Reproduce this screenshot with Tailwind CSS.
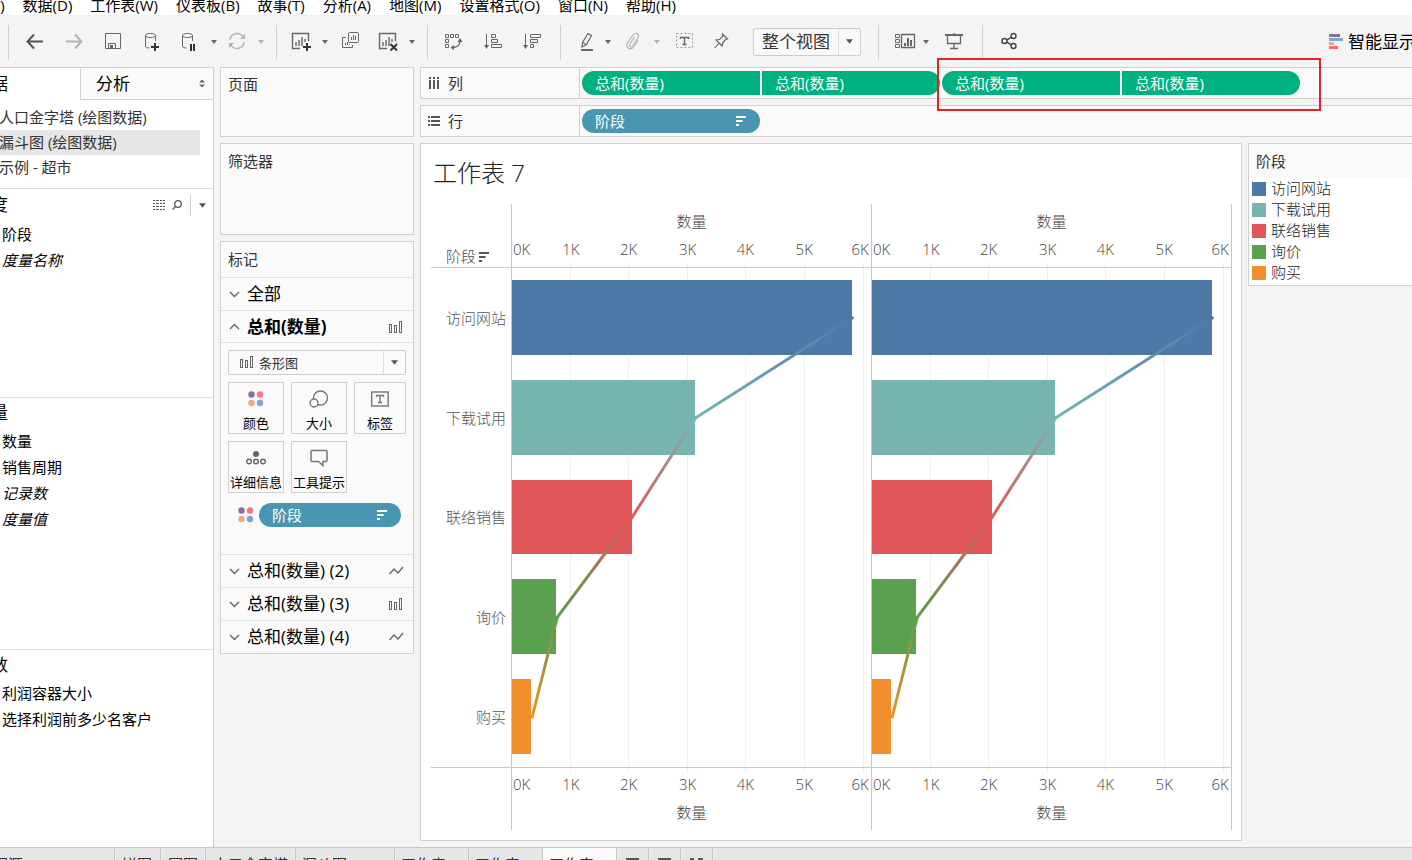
<!DOCTYPE html>
<html lang="zh-CN">
<head>
<meta charset="utf-8">
<title>工作表 7</title>
<script src="https://cdn.jsdelivr.net/npm/@tailwindcss/browser@4"></script>
</head>
<body class="flex h-screen flex-col overflow-hidden bg-[#f4f4f4] font-['Open_Sans','Noto_Sans_CJK_SC',sans-serif] text-[15px] leading-5 text-[#333]">

<!-- shared drawings -->
<svg class="absolute h-0 w-0" aria-hidden="true">
  <defs>
    <linearGradient id="g1" x1="1" y1="0" x2="0" y2="1"><stop offset="0" stop-color="#4e79a7"/><stop offset=".35" stop-color="#5b90b0"/><stop offset="1" stop-color="#76b7b2"/></linearGradient>
    <linearGradient id="g2" x1="1" y1="0" x2="0" y2="1"><stop offset="0" stop-color="#76b7b2"/><stop offset="1" stop-color="#e15759"/></linearGradient>
    <linearGradient id="g3" x1="1" y1="0" x2="0" y2="1"><stop offset="0" stop-color="#e15759"/><stop offset="1" stop-color="#59a14f"/></linearGradient>
    <linearGradient id="g4" x1="1" y1="0" x2="0" y2="1"><stop offset="0" stop-color="#59a14f"/><stop offset="1" stop-color="#f28e2b"/></linearGradient>
    <g id="plot">
      <g stroke="#f0f0f0" shape-rendering="crispEdges">
        <line x1="16.4%" x2="16.4%" y1="0" y2="100%"/><line x1="32.5%" x2="32.5%" y1="0" y2="100%"/><line x1="48.9%" x2="48.9%" y1="0" y2="100%"/><line x1="65%" x2="65%" y1="0" y2="100%"/><line x1="81.4%" x2="81.4%" y1="0" y2="100%"/><line x1="97.9%" x2="97.9%" y1="0" y2="100%"/>
      </g>
      <g shape-rendering="crispEdges">
        <rect x="0" y="2.4%" width="94.8%" height="15%" fill="#4e79a7"/>
        <rect x="0" y="22.4%" width="51%" height="15%" fill="#79b5b0"/>
        <rect x="0" y="42.4%" width="33.4%" height="15%" fill="#e15759"/>
        <rect x="0" y="62.4%" width="12.3%" height="15%" fill="#59a14f"/>
        <rect x="0" y="82.4%" width="5.4%" height="15%" fill="#f28e2b"/>
      </g>
      <g stroke-width="3" stroke-linecap="round">
        <line x1="94.8%" y1="10%" x2="51.2%" y2="30%" stroke="url(#g1)"/>
        <line x1="51.2%" y1="30%" x2="33.4%" y2="50%" stroke="url(#g2)"/>
        <line x1="33.4%" y1="50%" x2="12.6%" y2="70%" stroke="url(#g3)"/>
        <line x1="12.6%" y1="70%" x2="5.6%" y2="90%" stroke="url(#g4)"/>
      </g>
    </g>
    <g id="ticks" stroke="#f0f0f0" shape-rendering="crispEdges">
      <line x1="16.4%" x2="16.4%" y1="0" y2="5"/><line x1="32.5%" x2="32.5%" y1="0" y2="5"/><line x1="48.9%" x2="48.9%" y1="0" y2="5"/><line x1="65%" x2="65%" y1="0" y2="5"/><line x1="81.4%" x2="81.4%" y1="0" y2="5"/><line x1="97.9%" x2="97.9%" y1="0" y2="5"/>
    </g>
    <g id="bars" fill="none" stroke="#666"><rect x=".5" y="4.5" width="2" height="8"/><rect x="5.5" y="5.5" width="2" height="7"/><rect x="10.5" y="1.5" width="2" height="11"/></g>
    <path id="zig" d="M.5 10L5 5L9 9L14 3" fill="none" stroke="#666" stroke-width="1.4"/>
    <path id="down" d="M1 3L5.500 7.500L10 3" fill="none" stroke="#666" stroke-width="1.4"/>
    <path id="up" d="M1 8L5.500 3.500L10 8" fill="none" stroke="#666" stroke-width="1.4"/>
    <path id="caret" d="M0 0H6L3 4Z"/>
    <path id="sort" d="M0 1H10M0 5H6.500M0 9H3" fill="none" stroke-width="2"/>
    <g id="dots"><circle cx="3.500" cy="3.500" r="3.200" fill="#8a6f9b"/><circle cx="12" cy="3.500" r="3.200" fill="#f9767f"/><circle cx="3.500" cy="12" r="3.200" fill="#f3a97e"/><circle cx="12" cy="12" r="3.200" fill="#7fa6cf"/></g>
    <path id="db" d="M3.500 4.500C3.500 1.800 13.500 1.800 13.500 4.500C13.500 7.200 3.500 7.200 3.500 4.500V15C3.500 16.500 5 17 7.500 17M13.500 4.500V10" fill="none"/>
    <path id="sheet" d="M9 17.500H1.500V2.500H17.500V10M5 15V11M8 15V9M11 15V6M14 11V8" fill="none"/>
  </defs>
</svg>

<nav class="flex h-4 shrink-0 items-end overflow-hidden border-b border-[#f0f0f0] bg-white text-black">
  <div class="-ml-[42px] flex gap-[18px] whitespace-nowrap">
    <a href="#">文件(F)</a><a href="#">数据(D)</a><a href="#">工作表(W)</a><a href="#">仪表板(B)</a><a href="#">故事(T)</a><a href="#">分析(A)</a><a href="#">地图(M)</a><a href="#">设置格式(O)</a><a href="#">窗口(N)</a><a href="#">帮助(H)</a>
  </div>
</nav>

<header class="flex h-[51px] shrink-0 items-center overflow-hidden pl-2">
  <i class="mt-px h-[35px] w-px shrink-0 bg-[#d0d0d0]"></i>
  <button aria-label="后退" class="ml-4 shrink-0"><svg width="20" height="20" fill="none" stroke="#555" stroke-width="2"><path d="M2 9.500H18M9 2.500L2.500 9.500L9 16.500"/></svg></button>
  <button aria-label="前进" class="ml-[19px] shrink-0"><svg width="20" height="20" fill="none" stroke="#b4b4b4" stroke-width="2"><path d="M2 9.500H18M11 2.500L17.500 9.500L11 16.500"/></svg></button>
  <button aria-label="保存" class="ml-[19px] shrink-0"><svg width="20" height="20" fill="none" stroke="#666"><path d="M2.500 1.500H17.500V16.500H2.500ZM5.500 16V11.500H12.500V16"/><rect x="7" y="13" width="3" height="3" fill="#666" stroke="none"/></svg></button>
  <button aria-label="新建数据源" class="ml-[19px] shrink-0"><svg width="20" height="20" viewBox="0 1 20 20" stroke="#666"><use href="#db"/><path d="M9 16H17M13 12V20" stroke="#333" stroke-width="2"/></svg></button>
  <button aria-label="暂停自动更新" class="ml-[17px] shrink-0"><svg width="20" height="20" viewBox="0 1 20 20" stroke="#666"><use href="#db"/><path d="M12 13V20M15 13V20" stroke="#333" stroke-width="2"/></svg></button>
  <button aria-label="更多" class="ml-3 shrink-0"><svg width="6" height="4" fill="#666"><use href="#caret"/></svg></button>
  <button aria-label="刷新" class="ml-2.5 shrink-0"><svg width="20" height="20" viewBox="0 1 20 20" fill="none" stroke="#b4b4b4" stroke-width="1.4"><path d="M3 9A7 7 0 0 1 16 6M17 11A7 7 0 0 1 4 14"/><path d="M18 3V8H13ZM2 17V12H7Z" fill="#b4b4b4" stroke="none"/></svg></button>
  <button aria-label="更多" class="ml-[11px] shrink-0"><svg width="6" height="4" fill="#b4b4b4"><use href="#caret"/></svg></button>
  <i class="mt-px ml-3 h-[35px] w-px shrink-0 bg-[#d0d0d0]"></i>
  <button aria-label="新建工作表" class="ml-[14px] shrink-0"><svg width="20" height="20" viewBox="0 1 20 20" stroke="#666" stroke-width="1.400"><use href="#sheet"/><path d="M12 16H20M16 12V20" stroke="#333" stroke-width="2"/></svg></button>
  <button aria-label="更多" class="ml-[11px] shrink-0"><svg width="6" height="4" fill="#666"><use href="#caret"/></svg></button>
  <button aria-label="复制" class="ml-[13px] shrink-0"><svg width="20" height="20" viewBox="0 1 20 20" fill="none" stroke="#666"><rect x="7.500" y="1.500" width="10" height="10" rx="1"/><path d="M5 6.500H1.500V16.500H11.500V14M10.500 9V6M12.500 9V4M14.500 9V5M4.500 14V12M6.500 14V11M8.500 14V13" /></svg></button>
  <button aria-label="清除工作表" class="ml-[17px] shrink-0"><svg width="20" height="20" viewBox="0 1 20 20" stroke="#666" stroke-width="1.400"><use href="#sheet"/><path d="M12.500 13L19 19.500M19 13L12.500 19.500" stroke="#333" stroke-width="2"/></svg></button>
  <button aria-label="更多" class="ml-[11px] shrink-0"><svg width="6" height="4" fill="#666"><use href="#caret"/></svg></button>
  <i class="mt-px ml-3 h-[35px] w-px shrink-0 bg-[#d0d0d0]"></i>
  <button aria-label="交换行和列" class="ml-4 shrink-0"><svg width="20" height="20" viewBox="0 1 20 20" fill="none" stroke="#666"><path d="M1.500 3.500h3v3h-3zM6.500 3.500h3v3h-3zM11.500 3.500h3v3h-3zM1.500 8.500h3v3h-3zM1.500 13.500h3v3h-3z"/><path d="M16 10C16 14 13 16.500 8 16.500" stroke-width="1.300"/><path d="M16 7L18.500 11H13.500ZM6.500 16.500L10 14V19Z" fill="#666" stroke="none"/></svg></button>
  <button aria-label="升序排序" class="ml-[19px] shrink-0"><svg width="20" height="20" fill="none" stroke="#666"><path d="M3.500 2V15M8.500 2.500h4v3h-4zM8.500 7.500h6v3h-6zM8.500 12.500h10v3h-10z"/><path d="M1 13H6L3.500 17Z" fill="#666" stroke="none"/></svg></button>
  <button aria-label="降序排序" class="ml-[19px] shrink-0"><svg width="20" height="20" fill="none" stroke="#666"><path d="M3.500 2V15M8.500 2.500h10v3h-10zM8.500 7.500h7v3h-7zM8.500 12.500h3v3h-3z"/><path d="M1 13H6L3.500 17Z" fill="#666" stroke="none"/></svg></button>
  <i class="mt-px ml-[18px] h-[35px] w-px shrink-0 bg-[#d0d0d0]"></i>
  <button aria-label="突出显示" class="ml-4 shrink-0"><svg width="20" height="20" viewBox="0 1 20 20" fill="none" stroke="#666" stroke-width="1.200"><path d="M11 2.500L14.500 4.500L9.500 13.500L5 16L5.500 11.500ZM5.500 11.500L9.500 13.500"/><path d="M4 19H16" stroke-width="2"/></svg></button>
  <button aria-label="更多" class="ml-2 shrink-0"><svg width="6" height="4" fill="#666"><use href="#caret"/></svg></button>
  <button aria-label="组成员" class="ml-3 shrink-0"><svg width="20" height="20" viewBox="0 1 20 20" fill="none" stroke="#b4b4b4" stroke-width="1.200"><path d="M11.500 6L6.500 13.500C5.500 15.500 8 17 9.500 15L15 7C17 3.500 12.500.5 10 4L4.500 12C1.500 17 8 20 11 15.500L15 9.500"/></svg></button>
  <button aria-label="更多" class="ml-[11px] shrink-0"><svg width="6" height="4" fill="#b4b4b4"><use href="#caret"/></svg></button>
  <button aria-label="显示标记标签" class="ml-[14px] shrink-0"><svg width="20" height="20" fill="none" stroke="#666"><rect x="2.500" y="1.500" width="16" height="14" stroke="#999" stroke-dasharray="2 2"/><path d="M6.500 7V5.500H14.500V7M10.500 5.500V12.500M8.500 12.500H12.500" stroke-width="1.400"/></svg></button>
  <button aria-label="固定轴" class="ml-[17px] shrink-0"><svg width="20" height="20" fill="none" stroke="#666" stroke-width="1.200"><path d="M11.500 2L16.500 7L14.500 7.500L12 10.500L11 14L5 8L8.500 7.500L11.500 4.500ZM8 11L4 16"/></svg></button>
  <div class="relative ml-[22px] h-7 w-[108px] shrink-0">
    <label class="sr-only" for="fit">适合</label>
    <select id="fit" class="block h-7 w-full appearance-none rounded-xs border border-[#ccc] bg-[#f9f9f9] pl-2 text-[17px] leading-6 text-[#333]"><option>整个视图</option></select>
    <span class="pointer-events-none absolute inset-y-px right-px flex w-[22px] items-center justify-center border-l border-[#ddd]"><svg width="7" height="5" viewBox="0 0 6 4" fill="#555"><use href="#caret"/></svg></span>
  </div>
  <i class="mt-px ml-[17px] h-[35px] w-px shrink-0 bg-[#d0d0d0]"></i>
  <button aria-label="显示/隐藏卡" class="ml-[15px] shrink-0"><svg width="22" height="20" viewBox="0 0 22 20" fill="none" stroke="#666"><path d="M1.500 2.500h4v3h-4zM1.500 7.500h4v3h-4zM1.500 12.500h4v3h-4z"/><path d="M7.500 2.500H20.500V15.500H7.500Z" stroke-width="1.300"/><path d="M11 14V11M14 14V6M17 14V8" stroke-width="2"/></svg></button>
  <button aria-label="更多" class="ml-[7px] shrink-0"><svg width="6" height="4" fill="#666"><use href="#caret"/></svg></button>
  <button aria-label="演示模式" class="ml-[15px] shrink-0"><svg width="20" height="20" fill="none" stroke="#666" stroke-width="1.300"><path d="M1 3H19" stroke-width="2"/><path d="M3.500 4V11.500H16.500V4M10 11.500V16.500M6 16.500H14M10 1V3"/></svg></button>
  <i class="mt-px ml-[18px] h-[35px] w-px shrink-0 bg-[#d0d0d0]"></i>
  <button aria-label="共享" class="ml-[17px] shrink-0"><svg width="20" height="20" viewBox="0 1 20 20" fill="none" stroke="#444" stroke-width="1.400"><circle cx="4.500" cy="10" r="2.500"/><circle cx="13.500" cy="5" r="2.500"/><circle cx="13.500" cy="15" r="2.500"/><path d="M7 8.800L11.300 6.200M7 11.200L11.300 13.800"/></svg></button>
  <button class="ml-auto flex w-[83px] shrink-0 items-center gap-[5px] overflow-hidden whitespace-nowrap text-[17px] leading-6 text-black"><svg class="shrink-0" width="14" height="16"><path d="M0 0H11V3H0Z" fill="#8a6f9b"/><path d="M0 4H14V7H0Z" fill="#7fa6cf"/><path d="M0 8H5V11H0Z" fill="#f3a97e"/><path d="M0 12H9V15H0Z" fill="#f9697a"/></svg>智能显示</button>
</header>

<div class="flex min-h-0 flex-1">
  <!-- data pane -->
  <aside class="flex w-[214px] shrink-0 flex-col overflow-hidden border-r border-[#d0d0d0] bg-white whitespace-nowrap">
    <div class="flex h-[33px] shrink-0 text-[17px] leading-6 text-black">
      <button class="flex w-20 items-center overflow-hidden border-t border-[#d0d0d0]"><span class="-ml-[26px]">数据</span></button>
      <button class="flex flex-1 items-center justify-between border-t border-b border-l border-[#d0d0d0] bg-[#fafafa] pr-2 pl-[15px]">分析<svg width="6" height="9" fill="#666"><path d="M0 3.500L3 .5L6 3.500ZM0 5.500H6L3 8.500Z"/></svg></button>
    </div>
    <ul class="h-[89px] shrink-0 border-b border-[#e0e0e0] pt-[5px] leading-[25px]">
      <li class="-ml-px">人口金字塔 (绘图数据)</li>
      <li class="w-[200px] bg-[#e6e6e6]"><span class="-ml-px">漏斗图 (绘图数据)</span></li>
      <li class="-ml-px">示例 - 超市</li>
    </ul>
    <section class="h-[209px] shrink-0 border-b border-[#e0e0e0] leading-[26px] text-black">
      <div class="flex h-8 items-center pr-[7px]">
        <h2 class="-ml-[26px] text-[17px]">维度</h2>
        <button aria-label="查看数据" class="ml-auto"><svg width="12" height="10" stroke="#555"><path d="M0 .5H12M0 3.500H12M0 6.500H12M0 9.500H12" stroke-dasharray="2.250 1" shape-rendering="crispEdges"/></svg></button>
        <button aria-label="查找字段" class="ml-[7px]"><svg width="10" height="10" fill="none" stroke="#555" stroke-width="1.300"><circle cx="6" cy="4" r="3.300"/><path d="M3.500 6.500L.5 9.500"/></svg></button>
        <button aria-label="菜单" class="ml-2 flex h-[22px] items-center border-l border-[#d0d0d0] pl-2"><svg width="7" height="5" viewBox="0 0 6 4" fill="#555"><use href="#caret"/></svg></button>
      </div>
      <ul class="pl-0.5"><li>阶段</li><li class="italic">度量名称</li></ul>
    </section>
    <section class="h-[252px] shrink-0 border-b border-[#e0e0e0] leading-[26px] text-black">
      <h2 class="-ml-[9px] h-[30px] text-[17px] leading-[30px]"><span class="-ml-[17px]">度量</span></h2>
      <ul class="pl-0.5"><li>数量</li><li>销售周期</li><li class="italic">记录数</li><li class="italic">度量值</li></ul>
    </section>
    <section class="leading-[26px] text-black">
      <h2 class="-ml-[9px] h-[30px] text-[17px] leading-[30px]"><span class="-ml-[17px]">参数</span></h2>
      <ul class="pl-0.5"><li>利润容器大小</li><li>选择利润前多少名客户</li></ul>
    </section>
  </aside>

  <!-- cards -->
  <div class="ml-1.5 flex w-[194px] shrink-0 flex-col gap-1.5">
    <section class="h-[70px] border border-[#d0d0d0] bg-[#fafafa] px-[7px] pt-1.5"><h2>页面</h2></section>
    <section class="h-[92px] border border-[#d0d0d0] bg-[#fafafa] px-[7px] pt-[7px]"><h2>筛选器</h2></section>
    <section class="border border-[#d0d0d0] bg-[#fafafa]">
      <h2 class="h-[35px] px-[7px] pt-[7px]">标记</h2>
      <button class="flex h-[33px] w-full items-center gap-[7px] border-t border-[#e0e0e0] px-2 text-[17px] leading-6 text-black"><svg width="11" height="11"><use href="#down"/></svg>全部</button>
      <button class="flex h-[33px] w-full items-center gap-[7px] border-t border-b border-[#e0e0e0] px-2 text-[17px] leading-6 font-bold text-black"><svg width="11" height="11"><use href="#up"/></svg>总和(数量)<svg class="mr-0.5 ml-auto" width="14" height="14"><use href="#bars"/></svg></button>
      <div class="h-[211px] px-[7px] pt-[7px]">
        <div class="relative h-[25px] w-[178px]">
          <label class="sr-only" for="mark">标记类型</label>
          <select id="mark" class="block h-[25px] w-full appearance-none rounded-xs border border-[#ccc] bg-[#fafafa] pl-[30px] text-[13px] leading-5 text-[#333]"><option>条形图</option></select>
          <svg class="pointer-events-none absolute top-[5px] left-3" width="14" height="14"><use href="#bars"/></svg>
          <span class="pointer-events-none absolute inset-y-px right-px flex w-[22px] items-center justify-center border-l border-[#ddd]"><svg width="7" height="5" viewBox="0 0 6 4" fill="#555"><use href="#caret"/></svg></span>
        </div>
        <div class="mt-[7px] grid w-[178px] grid-cols-[56px_56px_52px] gap-[7px] text-[13px] leading-[18px] whitespace-nowrap text-black">
          <button class="flex h-[52px] flex-col items-center justify-between border border-[#d0d0d0] pt-2 pb-px"><svg width="16" height="16"><use href="#dots"/></svg>颜色</button>
          <button class="flex h-[52px] flex-col items-center justify-between border border-[#d0d0d0] pt-[7px] pb-px"><svg width="20" height="18" fill="#fafafa" stroke="#777" stroke-width="1.400"><circle cx="11.500" cy="8" r="7"/><circle cx="5" cy="13" r="4"/></svg>大小</button>
          <button class="flex h-[52px] flex-col items-center justify-between border border-[#d0d0d0] pt-[7px] pb-px"><svg width="18" height="18" fill="none" stroke="#777" stroke-width="1.400"><rect x=".7" y="2" width="16.500" height="14"/><path d="M5.500 7V5.500H12.500V7M9 5.500V12.500M7 12.500H11"/></svg>标签</button>
          <button class="flex h-[52px] flex-col items-center justify-between border border-[#d0d0d0] pt-[7px] pb-px"><svg width="20" height="18" fill="none" stroke="#666" stroke-width="1.400"><circle cx="10" cy="5" r="3" fill="#666" stroke="none"/><circle cx="3" cy="12.500" r="2.300"/><circle cx="10" cy="12.500" r="2.300"/><circle cx="17" cy="12.500" r="2.300"/></svg><span>详细信息</span></button>
          <button class="flex h-[52px] flex-col items-center justify-between border border-[#d0d0d0] pt-[7px] pb-px"><svg width="18" height="18" fill="none" stroke="#777" stroke-width="1.500"><path d="M2 1.500H16Q17 1.500 17 2.500V11.500Q17 12.500 16 12.500H13V16.500L8.500 12.500H2Q1 12.500 1 11.500V2.500Q1 1.500 2 1.500Z"/></svg><span>工具提示</span></button>
        </div>
        <div class="mt-2.5 flex items-center gap-[5px] pl-2.5">
          <svg width="16" height="16"><use href="#dots"/></svg>
          <button class="flex h-6 w-[142px] items-center justify-between rounded-full bg-[#4996b2] pr-3.5 pl-[13px] text-white">阶段<svg width="10" height="10" stroke="#fff"><use href="#sort"/></svg></button>
        </div>
      </div>
      <button class="flex h-[33px] w-full items-center gap-[7px] border-t border-[#e0e0e0] px-2 text-[17px] leading-6 text-black"><svg width="11" height="11"><use href="#down"/></svg>总和(数量) (2)<svg class="mr-px ml-auto" width="15" height="14"><use href="#zig"/></svg></button>
      <button class="flex h-[33px] w-full items-center gap-[7px] border-t border-[#e0e0e0] px-2 text-[17px] leading-6 text-black"><svg width="11" height="11"><use href="#down"/></svg>总和(数量) (3)<svg class="mr-0.5 ml-auto" width="14" height="14"><use href="#bars"/></svg></button>
      <button class="flex h-[33px] w-full items-center gap-[7px] border-t border-[#e0e0e0] px-2 text-[17px] leading-6 text-black"><svg width="11" height="11"><use href="#down"/></svg>总和(数量) (4)<svg class="mr-px ml-auto" width="15" height="14"><use href="#zig"/></svg></button>
    </section>
  </div>

  <!-- shelves and view -->
  <main class="relative ml-1.5 flex min-w-0 flex-1 flex-col gap-1.5 pb-1.5">
    <div class="flex h-8 shrink-0 overflow-hidden border-y border-l border-[#d0d0d0] bg-[#fafafa]">
      <div class="flex w-[159px] shrink-0 items-center gap-2 border-r border-[#d0d0d0] pl-2"><svg width="11" height="12" fill="#555"><path d="M0 0H2V2H0ZM0 3H2V12H0ZM4 0H6V2H4ZM4 3H6V12H4ZM8 0H10V2H8ZM8 3H10V12H8Z"/></svg>列</div>
      <div class="flex items-center gap-0.5 pl-0.5 text-white">
        <button class="h-6 w-[178px] shrink-0 rounded-l-full bg-[#00b180] pl-[13px] text-left">总和(数量)</button>
        <button class="h-6 w-[178px] shrink-0 rounded-r-full bg-[#00b180] pl-[13px] text-left">总和(数量)</button>
        <button class="h-6 w-[178px] shrink-0 rounded-l-full bg-[#00b180] pl-[13px] text-left">总和(数量)</button>
        <button class="h-6 w-[178px] shrink-0 rounded-r-full bg-[#00b180] pl-[13px] text-left">总和(数量)</button>
      </div>
    </div>
    <div class="flex h-8 shrink-0 border-y border-l border-[#d0d0d0] bg-[#fafafa]">
      <div class="flex w-[159px] shrink-0 items-center gap-2 border-r border-[#d0d0d0] pl-[7px]"><svg width="12" height="10" fill="#555"><path d="M0 0H2V2H0ZM3 0H12V2H3ZM0 4H2V6H0ZM3 4H12V6H3ZM0 8H2V10H0ZM3 8H12V10H3Z"/></svg>行</div>
      <div class="flex items-center pl-0.5 text-white">
        <button class="flex h-6 w-[178px] items-center justify-between rounded-full bg-[#4996b2] pr-3.5 pl-[13px]">阶段<svg width="10" height="10" stroke="#fff"><use href="#sort"/></svg></button>
      </div>
    </div>
    <div class="absolute -top-[9px] left-[517px] h-[53px] w-[384px] border-2 border-[#e8202a]"></div>

    <div class="flex min-h-0 flex-1 gap-1.5">
      <section class="flex min-w-0 flex-1 flex-col border border-[#d0d0d0] bg-white pr-[9px] pb-2.5 pl-2.5">
        <h1 class="h-[60px] shrink-0 pt-[13px] pl-0.5 text-[24px] leading-8 font-light text-[#222]">工作表 7</h1>
        <div class="grid min-h-0 flex-1 grid-cols-[80px_1fr_1fr] grid-rows-[63px_1fr_62px] border-r border-[#c8c8c8] text-[15px] font-light text-[#444]">
          <div class="flex items-end gap-[3px] pb-px pl-[15px]">阶段<svg class="mb-1" width="10" height="10" stroke="#555"><use href="#sort"/></svg></div>

          <div class="flex flex-col border-l border-[#c8c8c8] pt-[7px]">
            <div class="text-center">数量</div>
            <svg class="mt-[9px] w-full flex-1 overflow-visible" fill="#444"><g text-anchor="middle"><text x="16.4%" y="15">1K</text><text x="32.5%" y="15">2K</text><text x="48.9%" y="15">3K</text><text x="65%" y="15">4K</text><text x="81.4%" y="15">5K</text></g><text x="1" y="15">0K</text><text x="99.4%" y="15" text-anchor="end">6K</text><svg y="22" overflow="visible"><use href="#ticks"/></svg></svg>
          </div>
          <div class="flex flex-col border-l border-[#c8c8c8] pt-[7px]">
            <div class="text-center">数量</div>
            <svg class="mt-[9px] w-full flex-1 overflow-visible" fill="#444"><g text-anchor="middle"><text x="16.4%" y="15">1K</text><text x="32.5%" y="15">2K</text><text x="48.9%" y="15">3K</text><text x="65%" y="15">4K</text><text x="81.4%" y="15">5K</text></g><text x="1" y="15">0K</text><text x="99.4%" y="15" text-anchor="end">6K</text><svg y="22" overflow="visible"><use href="#ticks"/></svg></svg>
          </div>

          <div class="grid grid-rows-5 items-center border-y border-[#c8c8c8] pr-[5px] text-right text-[#555]"><span>访问网站</span><span>下载试用</span><span>联络销售</span><span>询价</span><span>购买</span></div>
          <div class="min-h-0 border-y border-l border-[#c8c8c8]"><svg class="h-full w-full overflow-visible"><use href="#plot"/></svg></div>
          <div class="min-h-0 border-y border-l border-[#c8c8c8]"><svg class="h-full w-full overflow-visible"><use href="#plot"/></svg></div>

          <div></div>
          <div class="flex flex-col border-l border-[#c8c8c8]">
            <svg class="h-[34px] w-full overflow-visible" fill="#444"><g text-anchor="middle"><text x="16.4%" y="22">1K</text><text x="32.5%" y="22">2K</text><text x="48.9%" y="22">3K</text><text x="65%" y="22">4K</text><text x="81.4%" y="22">5K</text></g><text x="1" y="22">0K</text><text x="99.4%" y="22" text-anchor="end">6K</text><use href="#ticks"/></svg>
            <div class="text-center">数量</div>
          </div>
          <div class="flex flex-col border-l border-[#c8c8c8]">
            <svg class="h-[34px] w-full overflow-visible" fill="#444"><g text-anchor="middle"><text x="16.4%" y="22">1K</text><text x="32.5%" y="22">2K</text><text x="48.9%" y="22">3K</text><text x="65%" y="22">4K</text><text x="81.4%" y="22">5K</text></g><text x="1" y="22">0K</text><text x="99.4%" y="22" text-anchor="end">6K</text><use href="#ticks"/></svg>
            <div class="text-center">数量</div>
          </div>
        </div>
      </section>

      <section class="w-[164px] shrink-0 self-start border-y border-l border-[#d0d0d0] bg-white pb-0.5">
        <h2 class="h-[34px] bg-[#fafafa] pt-[7px] pl-[7px]">阶段</h2>
        <ul class="pl-[3px] leading-[21px] font-light text-[#222]">
          <li class="flex items-center gap-[5px]"><i class="h-3.5 w-3.5 bg-[#4e79a7]"></i>访问网站</li>
          <li class="flex items-center gap-[5px]"><i class="h-3.5 w-3.5 bg-[#79b5b0]"></i>下载试用</li>
          <li class="flex items-center gap-[5px]"><i class="h-3.5 w-3.5 bg-[#e15759]"></i>联络销售</li>
          <li class="flex items-center gap-[5px]"><i class="h-3.5 w-3.5 bg-[#59a14f]"></i>询价</li>
          <li class="flex items-center gap-[5px]"><i class="h-3.5 w-3.5 bg-[#f28e2b]"></i>购买</li>
        </ul>
      </section>
    </div>
  </main>
</div>

<!-- sheet tabs -->
<footer class="flex h-[13px] shrink-0 items-start overflow-hidden border-t border-[#c8c8c8] bg-[#e6e6e6] whitespace-nowrap">
  <button class="flex h-8 w-[115px] shrink-0 items-start border-r border-[#c8c8c8] pt-1.5"><span class="-ml-[22px]">数据源</span></button>
  <button class="flex h-8 w-[46px] shrink-0 items-start border-r border-[#c8c8c8] pt-1.5 pl-[7px]">饼图</button>
  <button class="flex h-8 w-[45px] shrink-0 items-start border-r border-[#c8c8c8] pt-1.5 pl-[7px]">圆图</button>
  <button class="flex h-8 w-[90px] shrink-0 items-start border-r border-[#c8c8c8] pt-1.5 pl-[7px]">人口金字塔</button>
  <button class="flex h-8 w-[99px] shrink-0 items-start border-r border-[#c8c8c8] pt-1.5 pl-1.5">漏斗图</button>
  <button class="flex h-8 w-[74px] shrink-0 items-start border-r border-[#c8c8c8] pt-1.5 pl-1.5">工作表 5</button>
  <button class="flex h-8 w-[74px] shrink-0 items-start border-r border-[#c8c8c8] pt-1.5 pl-1.5">工作表 6</button>
  <button class="flex h-8 w-[74px] shrink-0 items-start border-r border-[#c8c8c8] bg-[#fafafa] pt-1.5 pl-1.5">工作表 7</button>
  <button aria-label="新建工作表" class="flex h-8 w-8 shrink-0 items-start border-r border-[#c8c8c8] pt-[9px] pl-2"><svg width="16" height="14" fill="none" stroke="#555" stroke-width="2"><path d="M2 13V2H13V7"/></svg></button>
  <button aria-label="新建仪表板" class="flex h-8 w-8 shrink-0 items-start border-r border-[#c8c8c8] pt-[9px] pl-2"><svg width="16" height="14" fill="none" stroke="#555" stroke-width="2"><path d="M2 13V2H13V7"/></svg></button>
  <button aria-label="新建故事" class="flex h-8 w-8 shrink-0 items-start border-r border-[#c8c8c8] pt-[9px] pl-2"><svg width="16" height="14" fill="none" stroke="#555" stroke-width="2"><path d="M2 13V2H5M9 2H13V7"/></svg></button>
</footer>
</body>
</html>
